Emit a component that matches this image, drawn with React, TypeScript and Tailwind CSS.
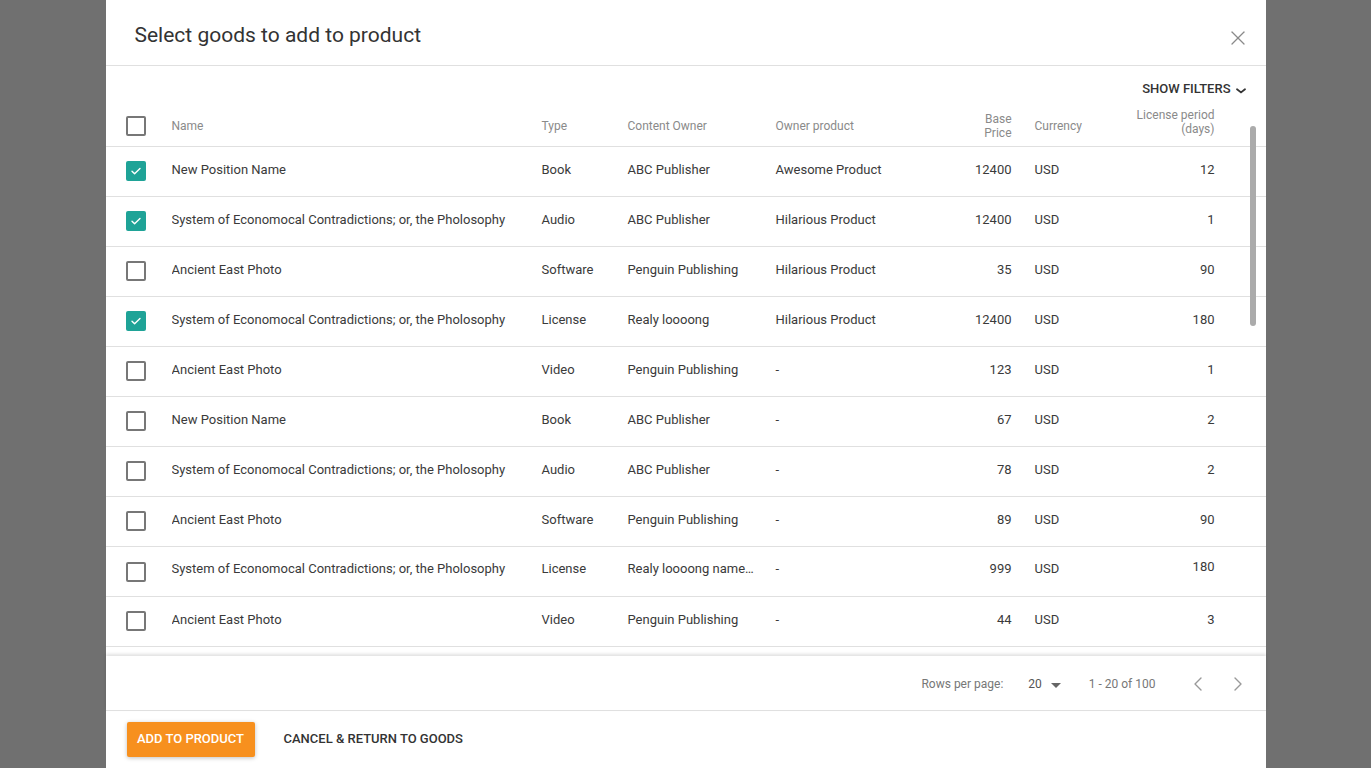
import { ChevronLeft, ChevronRight, X } from 'lucide-react'

type Row = {
  checked: boolean
  name: string
  type: string
  owner: string
  product: string
  price: string
  period: string
  lift?: boolean
}

const rows: Row[] = [
  { checked: true, name: 'New Position Name', type: 'Book', owner: 'ABC Publisher', product: 'Awesome Product', price: '12400', period: '12' },
  { checked: true, name: 'System of Economocal Contradictions; or, the Pholosophy', type: 'Audio', owner: 'ABC Publisher', product: 'Hilarious Product', price: '12400', period: '1' },
  { checked: false, name: 'Ancient East Photo', type: 'Software', owner: 'Penguin Publishing', product: 'Hilarious Product', price: '35', period: '90' },
  { checked: true, name: 'System of Economocal Contradictions; or, the Pholosophy', type: 'License', owner: 'Realy loooong', product: 'Hilarious Product', price: '12400', period: '180' },
  { checked: false, name: 'Ancient East Photo', type: 'Video', owner: 'Penguin Publishing', product: '-', price: '123', period: '1' },
  { checked: false, name: 'New Position Name', type: 'Book', owner: 'ABC Publisher', product: '-', price: '67', period: '2' },
  { checked: false, name: 'System of Economocal Contradictions; or, the Pholosophy', type: 'Audio', owner: 'ABC Publisher', product: '-', price: '78', period: '2' },
  { checked: false, name: 'Ancient East Photo', type: 'Software', owner: 'Penguin Publishing', product: '-', price: '89', period: '90' },
  { checked: false, name: 'System of Economocal Contradictions; or, the Pholosophy', type: 'License', owner: 'Realy loooong name…', product: '-', price: '999', period: '180', lift: true },
  { checked: false, name: 'Ancient East Photo', type: 'Video', owner: 'Penguin Publishing', product: '-', price: '44', period: '3' },
]

function Checkbox({ checked }: { checked: boolean }) {
  if (checked) {
    return (
      <div className="flex h-5 w-5 items-center justify-center rounded-[2px] bg-[#1fa397]">
        <svg width="12" height="12" viewBox="0 0 12 12" fill="none">
          <path d="M2 6.2l2.6 2.6L10 3.4" stroke="white" strokeWidth="1.4" strokeLinecap="round" strokeLinejoin="round" />
        </svg>
      </div>
    )
  }
  return <div className="h-5 w-5 rounded-[2px] border-2 border-[#777]" />
}

export default function App() {
  return (
    <div className="flex h-screen w-full justify-center overflow-hidden bg-[#707070] font-['Roboto',sans-serif]">
      <div className="flex h-full w-[1160px] flex-col bg-white">
        {/* Title */}
        <div className="flex h-[66px] shrink-0 items-center justify-between border-b border-[#e0e0e0] pl-[29px] pr-[16px]">
          <h1 className="pt-[6px] text-[21px] text-[#333]">Select goods to add to product</h1>
          <X className="mt-[10px] h-[24px] w-[24px] text-[#8a8a8a]" strokeWidth={1.3} />
        </div>

        {/* Table area */}
        <div className="relative h-[590px] shrink-0 overflow-hidden">
          <div className="flex h-[34px] items-center justify-end pr-[20px] pt-[12px]">
            <span className="text-[13px] font-medium text-[#333]">SHOW FILTERS</span>
            <svg className="ml-[5px] mt-[3px]" width="10" height="6" viewBox="0 0 10 6" fill="none">
              <path d="M1 1.2l4 3.2 4-3.2" stroke="#333" strokeWidth="1.8" strokeLinecap="round" />
            </svg>
          </div>

          <div className="flex h-[47px] items-center border-b border-[#e0e0e0] pt-[5px] text-[12px] text-[#8a8a8a]">
            <div className="w-[66px] pl-5">
              <Checkbox checked={false} />
            </div>
            <div className="w-[370px]">Name</div>
            <div className="w-[86px]">Type</div>
            <div className="w-[148px]">Content Owner</div>
            <div className="w-[164px]">Owner product</div>
            <div className="w-[72px] text-right leading-[14px]">
              Base
              <br />
              Price
            </div>
            <div className="ml-[23px] w-[80px]">Currency</div>
            <div className="mb-2 w-[100px] text-right leading-[14px]">
              License period
              <br />
              (days)
            </div>
          </div>

          {rows.map((r, i) => (
            <div
              key={i}
              className={`flex h-[50px] items-center border-b border-[#e0e0e0] text-[13px] text-[#3a3a3a] ${r.lift ? 'pb-[5px]' : 'pb-[3px]'}`}
            >
              <div className={`w-[66px] pl-5 ${r.lift ? 'pt-[5px]' : 'pt-[2px]'}`}>
                <Checkbox checked={r.checked} />
              </div>
              <div className="w-[370px] truncate">{r.name}</div>
              <div className="w-[86px]">{r.type}</div>
              <div className="w-[148px] whitespace-nowrap">{r.owner}</div>
              <div className="w-[164px]">{r.product}</div>
              <div className="w-[72px] text-right">{r.price}</div>
              <div className="ml-[23px] w-[80px]">USD</div>
              <div className={`w-[100px] text-right ${r.lift ? 'mb-1' : ''}`}>{r.period}</div>
            </div>
          ))}

          {/* scrollbar thumb */}
          <div className="absolute right-[10px] top-[60px] h-[200px] w-[6px] rounded-full bg-[#ababab]" />
        </div>

        {/* Pagination */}
        <div className="relative z-10 flex h-[55px] shrink-0 items-center justify-end border-b border-[#e0e0e0] bg-white pr-[16px] pt-[2px] text-[12px] text-[#777] shadow-[0_-2px_3px_rgba(0,0,0,0.12)]">
          <span>Rows per page:</span>
          <span className="ml-[25px] text-[#555]">20</span>
          <svg className="ml-[9px] mt-[2px]" width="10" height="5" viewBox="0 0 10 5">
            <path d="M0 0h10L5 5z" fill="#666" />
          </svg>
          <span className="ml-[28px]">1 - 20 of 100</span>
          <ChevronLeft className="ml-[30px] h-6 w-6 text-[#999]" strokeWidth={1.4} />
          <ChevronRight className="ml-[16px] h-6 w-6 text-[#999]" strokeWidth={1.4} />
        </div>

        {/* Actions */}
        <div className="flex flex-1 items-start pl-[21px] pt-[11px]">
          <button className="h-[35px] w-[128px] rounded-[2px] bg-[#f7901e] pb-[2px] text-[13px] font-medium text-white shadow-[0_1px_4px_rgba(0,0,0,0.25)]">
            ADD TO PRODUCT
          </button>
          <button className="ml-[29px] h-[35px] pb-[2px] text-[13px] font-medium text-[#333]">CANCEL &amp; RETURN TO GOODS</button>
        </div>
      </div>
    </div>
  )
}
